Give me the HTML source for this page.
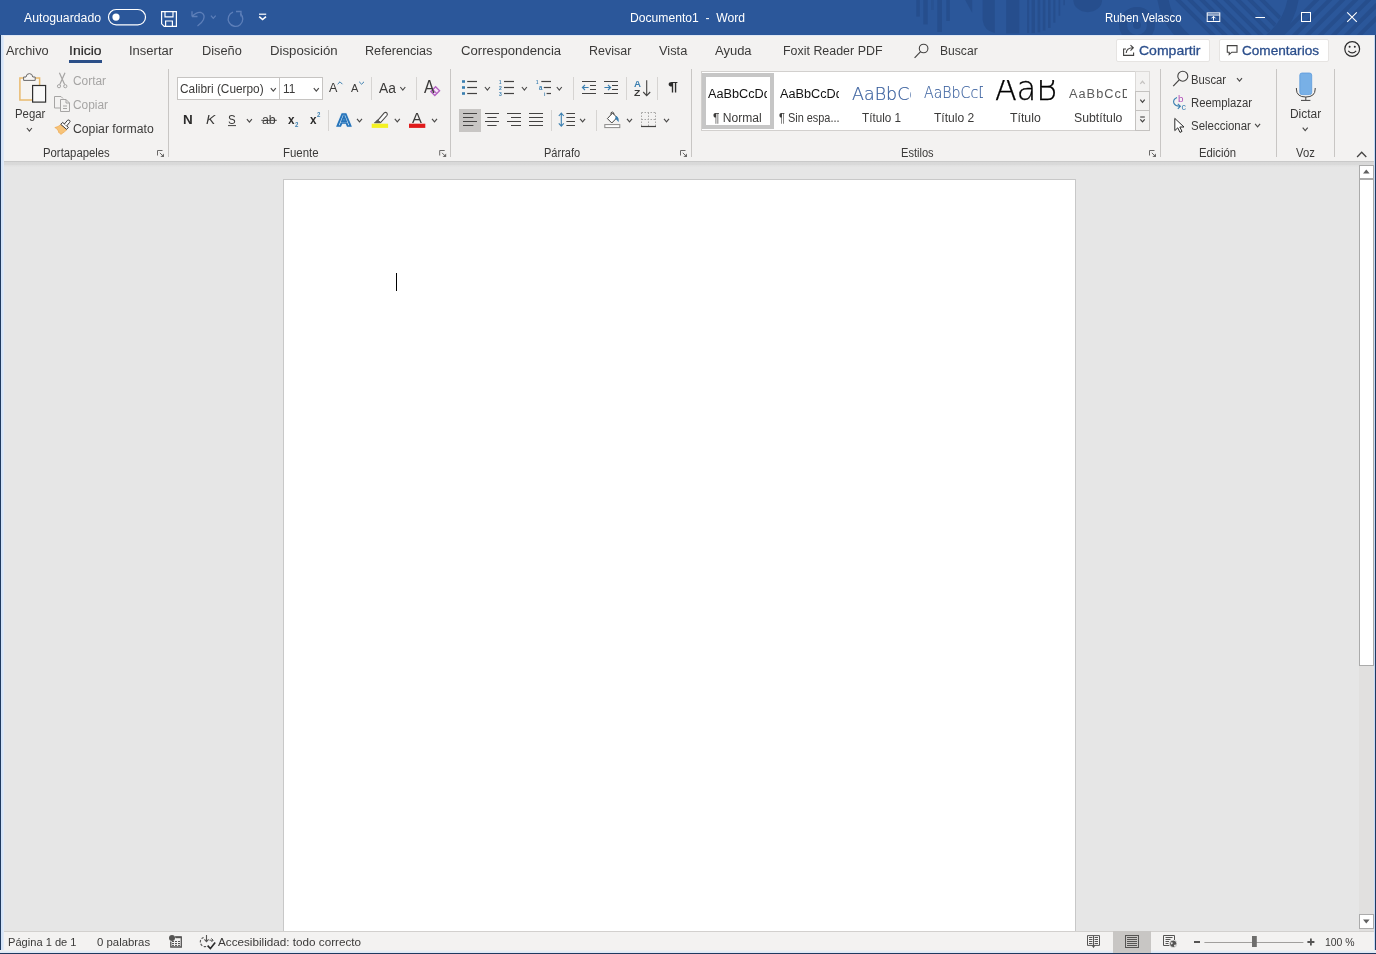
<!DOCTYPE html>
<html lang="es"><head><meta charset="utf-8"><title>Documento1 - Word</title>
<style>
html,body{margin:0;padding:0;}
body{width:1376px;height:954px;overflow:hidden;background:#e6e6e6;font-family:"Liberation Sans",sans-serif;}
#app{position:relative;width:1376px;height:954px;overflow:hidden;background:#e6e6e6;}
#app div{position:absolute;box-sizing:border-box;}
#icons{position:absolute;left:0;top:0;}
.t{position:absolute;white-space:nowrap;transform-origin:0 50%;}
.clip{overflow:hidden;}
#texts{left:0;top:0;width:1376px;height:954px;will-change:transform;}

</style></head>
<body>
<div id="app">
<div id="titlebar" style="left:0;top:0;width:1376px;height:35px;background:#2b579a;"></div>
<div id="tabrow" style="left:0;top:35px;width:1376px;height:31px;background:#f3f2f1;border-top:1px solid #dfe8f5;"></div>
<div id="ribbon" style="left:0;top:66px;width:1376px;height:95px;background:#f3f2f1;"></div>
<div id="ribshadow" style="left:0;top:161px;width:1376px;height:6px;background:linear-gradient(#c9c9c9 0,#c9c9c9 16.6%,#d8d8d8 16.7%,#dadada 60%,#e1e1e1 75%,#e5e5e5 100%);"></div>
<div id="tabsel" style="left:69px;top:60px;width:33px;height:3px;background:#2b4f88;"></div>
<div id="btnshare" style="left:1115.5px;top:39px;width:94px;height:22.5px;background:#fff;border:1px solid #e6e4e2;border-radius:2px;"></div>
<div id="btncomm" style="left:1218.5px;top:39px;width:110px;height:22.5px;background:#fff;border:1px solid #e6e4e2;border-radius:2px;"></div>
<!-- group separators -->
<div class="gsep" style="left:168px;top:69px;width:1px;height:88px;background:#c8c6c4;"></div>
<div class="gsep" style="left:450px;top:69px;width:1px;height:88px;background:#c8c6c4;"></div>
<div class="gsep" style="left:691px;top:69px;width:1px;height:88px;background:#c8c6c4;"></div>
<div class="gsep" style="left:1160px;top:69px;width:1px;height:88px;background:#c8c6c4;"></div>
<div class="gsep" style="left:1276px;top:69px;width:1px;height:88px;background:#c8c6c4;"></div>
<div class="gsep" style="left:1334px;top:69px;width:1px;height:88px;background:#c8c6c4;"></div>
<!-- small separators -->
<div class="ssep" style="left:371px;top:77px;width:1px;height:23px;background:#d6d4d2;"></div>
<div class="ssep" style="left:416px;top:77px;width:1px;height:23px;background:#d6d4d2;"></div>
<div class="ssep" style="left:328px;top:110px;width:1px;height:21px;background:#d6d4d2;"></div>
<div class="ssep" style="left:573px;top:77px;width:1px;height:23px;background:#d6d4d2;"></div>
<div class="ssep" style="left:626px;top:77px;width:1px;height:23px;background:#d6d4d2;"></div>
<div class="ssep" style="left:657px;top:77px;width:1px;height:23px;background:#d6d4d2;"></div>
<div class="ssep" style="left:551px;top:110px;width:1px;height:21px;background:#d6d4d2;"></div>
<div class="ssep" style="left:596px;top:110px;width:1px;height:21px;background:#d6d4d2;"></div>
<!-- font boxes -->
<div id="fontname" style="left:177px;top:77px;width:103px;height:23px;background:#fff;border:1px solid #c6c4c2;"></div>
<div id="fontsize" style="left:279px;top:77px;width:44px;height:23px;background:#fff;border:1px solid #c6c4c2;"></div>
<!-- active align-left -->
<div id="alignsel" style="left:459px;top:109px;width:22px;height:23px;background:#c8c6c4;"></div>
<!-- styles gallery -->
<div id="gallery" style="left:701px;top:71px;width:449px;height:59.5px;background:#fff;border:1px solid #d2d0ce;"></div>
<div id="stylesel" style="left:702px;top:73.2px;width:71.6px;height:55.5px;background:#c6c6c6;"></div>
<div id="styleselin" style="left:705.6px;top:76.8px;width:64.7px;height:48.2px;background:#fff;"></div>
<div id="galup" style="left:1135px;top:71px;width:15px;height:21px;background:#f3f2f1;border:1px solid #dcdad8;"></div>
<div id="galdn" style="left:1135px;top:91px;width:15px;height:20px;background:#f3f2f1;border:1px solid #c4c2c0;"></div>
<div id="galmore" style="left:1135px;top:110px;width:15px;height:20.5px;background:#f3f2f1;border:1px solid #c4c2c0;"></div>
<!-- page -->
<div id="page" style="left:283px;top:179px;width:793px;height:760px;background:#fff;border:1px solid #c8c8c8;"></div>
<div id="caret" style="left:396px;top:273px;width:1px;height:18px;background:#000;"></div>
<!-- scrollbar -->
<div id="sbtrack" style="left:1359px;top:165px;width:15px;height:766px;background:#e1e0df;"></div>
<div id="sbup" style="left:1359px;top:165px;width:15px;height:14px;background:#fff;border:1px solid #ababab;"></div>
<div id="sbthumb" style="left:1359px;top:179px;width:15px;height:487px;background:#fff;border:1px solid #ababab;"></div>
<div id="sbdown" style="left:1359px;top:914px;width:15px;height:15px;background:#fff;border:1px solid #ababab;"></div>
<!-- status bar -->
<div id="status" style="left:0;top:931px;width:1376px;height:23px;background:#f3f2f1;border-top:1px solid #d2d0ce;"></div>
<!-- window borders -->
<div id="bl1" style="left:0;top:35px;width:1px;height:919px;background:#1f3a60;"></div>
<div id="bl2" style="left:1px;top:35px;width:3.4px;height:917px;background:linear-gradient(to right,#d5e4f8 55%,#e8eff8);"></div>
<div id="br1" style="left:1375px;top:35px;width:1px;height:919px;background:#1f3a60;"></div>
<div id="br2" style="left:1373.5px;top:35px;width:1.5px;height:917px;background:#c5d9f5;"></div>
<div id="bb0" style="left:0;top:950px;width:1376px;height:3px;background:linear-gradient(#f3f2f1,#d9e6f7);"></div>
<div id="viewsel" style="left:1113px;top:931px;width:38px;height:21.6px;background:#c8c6c4;"></div>
<div id="bb1" style="left:0;top:952.6px;width:1376px;height:1.4px;background:#1f3a60;"></div>

<svg id="icons" width="1376" height="954" viewBox="0 0 1376 954">
<defs><clipPath id="tbclip"><rect x="0" y="0" width="1376" height="35"/></clipPath><clipPath id="circ"><circle cx="1228" cy="-12" r="60"/></clipPath></defs>
<g clip-path="url(#tbclip)">
<g fill="#264e8d">
<rect x="916.3" y="0" width="3.5" height="16.6"/><rect x="923.3" y="0" width="4.4" height="24.4"/><rect x="931" y="0" width="2.8" height="10" opacity=".6"/><rect x="937.3" y="0" width="4.7" height="32"/><rect x="946.3" y="0" width="3.5" height="21"/>
<path d="M965.2,0 H972.2 V13 Z"/>
<path d="M982.6,0 H994.8 V33 Q984,31 982.6,20 Z"/>
<rect x="1006.2" y="0" width="13.1" height="33.5"/>
<rect x="1027.1" y="0" width="2.1" height="33.1"/>
<rect x="1031.5" y="0" width="3.5" height="33.1"/>
<rect x="1037.6" y="0" width="2.6" height="32.3"/>
<rect x="1042.8" y="0" width="2.6" height="30.5"/>
<rect x="1048.0" y="0" width="2.6" height="27.9"/>
<rect x="1053.3" y="0" width="2.1" height="22.7"/>
<rect x="1058.5" y="0" width="1.7" height="15.7"/>
<rect x="1063.4" y="0" width="1.4" height="5.2"/>
<path d="M1073.3,0 H1102.1 A14.4,12.2 0 0 1 1073.3,0 Z"/>
<circle cx="1137" cy="25" r="4"/>
</g>
<g fill="none" stroke="#264e8d">
<circle cx="1137" cy="25" r="14" stroke-width="8"/>
<circle cx="1228" cy="-12" r="66" stroke-width="11"/>
<g clip-path="url(#circ)">
<path d="M1176,-2 L1216,38" stroke-width="4"/>
<path d="M1188,-2 L1228,38" stroke-width="4"/>
<path d="M1200,-2 L1240,38" stroke-width="4"/>
<path d="M1212,-2 L1252,38" stroke-width="4"/>
<path d="M1224,-2 L1264,38" stroke-width="4"/>
<path d="M1236,-2 L1276,38" stroke-width="4"/>
<path d="M1248,-2 L1288,38" stroke-width="4"/>
<path d="M1260,-2 L1300,38" stroke-width="4"/>
</g>
<path d="M1318.6,-2 L1278.6,38" stroke-width="4"/>
<path d="M1331.6,-2 L1291.6,38" stroke-width="4"/>
<path d="M1344.6,-2 L1304.6,38" stroke-width="4"/>
<path d="M1357.6,-2 L1317.6,38" stroke-width="4"/>
<path d="M1370.6,-2 L1330.6,38" stroke-width="4"/>
<path d="M1383.6,-2 L1343.6,38" stroke-width="4"/>
<path d="M1396.6,-2 L1356.6,38" stroke-width="4"/>
</g>
</g>
<rect x="108.5" y="9.5" width="37" height="15.4" rx="7.7" fill="none" stroke="#fff" stroke-width="1.2"/>
<circle cx="116" cy="17.1" r="3.6" fill="#fff"/>
<path d="M161.6,11.6 H176.4 V26.4 H164.2 L161.6,23.8 Z" fill="none" stroke="#fff" stroke-width="1.2"/>
<path d="M165,11.6 V16.8 H173 V11.6" fill="none" stroke="#fff" stroke-width="1.2"/>
<path d="M165.6,26.4 V21 H172.4 V26.4" fill="none" stroke="#fff" stroke-width="1.2"/>
<path d="M192,16.5 H197.5 M192,16.5 V11.2 M192.3,16.2 Q197,11.5 201,12.5 Q205.5,14.5 203.5,19.5 Q202,23 197.5,26" fill="none" stroke="#5d7fb9" stroke-width="1.3"/>
<path d="M210.9,15.6 L213.3,18.4 L215.7,15.6" fill="none" stroke="#5d7fb9" stroke-width="1.2"/>
<path d="M240.2,13.5 A7.3,7.3 0 1 1 233,12.2" fill="none" stroke="#5d7fb9" stroke-width="1.3"/>
<path d="M236,11.5 H241 V16.5" fill="none" stroke="#5d7fb9" stroke-width="1.3"/>
<path d="M259,14.2 H266.2" stroke="#fff" stroke-width="1.2"/>
<path d="M259.2,16.6 L262.6,19.6 L266,16.6" fill="none" stroke="#fff" stroke-width="1.5"/>
<rect x="1207.2" y="12.9" width="12.6" height="8.6" fill="none" stroke="#fff" stroke-width="1"/>
<path d="M1207.2,15 H1219.8" stroke="#fff" stroke-width="1"/>
<path d="M1213.5,20.5 V16.5 M1211.5,18.3 L1213.5,16.3 L1215.5,18.3" fill="none" stroke="#fff" stroke-width="1"/>
<path d="M1255.4,17.5 H1265" stroke="#fff" stroke-width="1"/>
<rect x="1301.5" y="12.5" width="9" height="9" fill="none" stroke="#fff" stroke-width="1"/>
<path d="M1347.2,12.3 L1356.8,21.9 M1356.8,12.3 L1347.2,21.9" stroke="#fff" stroke-width="1.1"/>
<circle cx="923.6" cy="48.5" r="4.3" fill="none" stroke="#444342" stroke-width="1.1"/>
<path d="M920.6,51.6 L914.6,57.8" stroke="#444342" stroke-width="1.2"/>
<path d="M1126,49 H1123.6 V55.4 H1133.6 V52.5" fill="none" stroke="#444342" stroke-width="1.1"/>
<path d="M1126.2,53 Q1126.5,48 1133,47.8 M1130.5,45.2 L1133.3,47.8 L1130.5,50.6" fill="none" stroke="#444342" stroke-width="1.1"/>
<path d="M1227.3,45.6 H1237 V52.2 H1231.8 L1229.2,54.6 V52.2 H1227.3 Z" fill="none" stroke="#444342" stroke-width="1.1"/>
<circle cx="1352.2" cy="49" r="7.4" fill="none" stroke="#2b2b2b" stroke-width="1.2"/>
<circle cx="1349.6" cy="46.8" r="1" fill="#2b2b2b"/><circle cx="1354.8" cy="46.8" r="1" fill="#2b2b2b"/>
<path d="M1348.2,50.8 Q1352.2,55 1356.2,50.8" fill="none" stroke="#2b2b2b" stroke-width="1.1"/>
<path d="M39.6,85 V78 H19.9 V100 H32" fill="#f6f4f1" stroke="#e9bb6e" stroke-width="1.5"/>
<path d="M23.6,80.4 V77 H26 Q26.4,73.6 29.4,73.6 Q32.4,73.6 32.8,77 H35.2 V80.4 Z" fill="#f6f5f4" stroke="#6a6968" stroke-width="1"/>
<rect x="32.6" y="85.5" width="13" height="16.6" fill="#f9f9f9" stroke="#2f2f2f" stroke-width="1.2"/>
<path d="M26.9,128.0 L29.4,131.0 L31.9,128.0" fill="none" stroke="#4a4948" stroke-width="1.15"/>
<path d="M59.4,72.8 L64.6,84.6 M65,72.8 L59.8,84.6" fill="none" stroke="#a6a5a4" stroke-width="1.2"/>
<circle cx="59" cy="86.2" r="1.6" fill="none" stroke="#a6a5a4" stroke-width="1"/><circle cx="65.3" cy="86.2" r="1.6" fill="none" stroke="#a6a5a4" stroke-width="1"/>
<path d="M60,108 H54.5 V96.5 H61 L63,98.5" fill="none" stroke="#a6a5a4" stroke-width="1"/>
<path d="M60.5,99.5 H66 L69.5,103 V111.5 H60.5 Z" fill="#f3f2f1" stroke="#a6a5a4" stroke-width="1"/>
<path d="M66,99.5 V103 H69.5 M63,106 H67 M63,108.5 H67" fill="none" stroke="#a6a5a4" stroke-width="1"/>
<path d="M54.8,127.6 Q58,127 61,124.6 L67,129.6 Q64.6,132 60.8,134.4 Q59.6,132.4 58.6,132.4 Q59,130.4 57.6,130.2 Q57.4,128.4 54.8,127.6 Z" fill="#f7c378" stroke="#eea84f" stroke-width=".7"/>
<path d="M60.8,124.4 L62.6,122.4 L68.4,127.4 L66.6,129.4 Z" fill="#fbfbfb" stroke="#3b3a39" stroke-width="1"/>
<path d="M64.4,124 L67.6,120.2 Q69,119.6 69.8,120.6 Q70.4,121.6 69.6,122.4 L66.6,126" fill="#fbfbfb" stroke="#3b3a39" stroke-width="1"/>
<path d="M157.5,155.5 V150.5 H162.5" fill="none" stroke="#6a6968" stroke-width="1"/>
<path d="M159.8,152.8 L163,156" fill="none" stroke="#6a6968" stroke-width="1"/>
<path d="M164,153.4 V157 H160.4 Z" fill="#6a6968"/>
<path d="M270.8,88.1 L273.3,91.1 L275.8,88.1" fill="none" stroke="#4a4948" stroke-width="1.15"/>
<path d="M313.8,88.1 L316.3,91.1 L318.8,88.1" fill="none" stroke="#4a4948" stroke-width="1.15"/>
<path d="M337.6,84.2 L340,81.8 L342.4,84.2" fill="none" stroke="#3b7fb0" stroke-width="1"/>
<path d="M359.2,81.8 L361.6,84.2 L364,81.8" fill="none" stroke="#3b7fb0" stroke-width="1"/>
<path d="M400.3,87.0 L402.8,90.0 L405.3,87.0" fill="none" stroke="#4a4948" stroke-width="1.15"/>
<path d="M430.8,91.5 L435.6,86.7 L439.6,90.7 L434.8,95.5 Z" fill="#f6e6f8" stroke="#b35fc1" stroke-width="1.3"/>
<path d="M432.8,89.6 L436.8,93.6" stroke="#b35fc1" stroke-width="1.2"/>
<path d="M228,125.6 H236" stroke="#444342" stroke-width="1"/>
<path d="M246.9,119.1 L249.4,122.1 L251.9,119.1" fill="none" stroke="#4a4948" stroke-width="1.15"/>
<path d="M261.3,120.3 H276.8" stroke="#444342" stroke-width="1"/>
<path d="M357.0,118.9 L359.5,121.9 L362.0,118.9" fill="none" stroke="#4a4948" stroke-width="1.15"/>
<path d="M394.8,118.9 L397.3,121.9 L399.8,118.9" fill="none" stroke="#4a4948" stroke-width="1.15"/>
<path d="M432.0,118.9 L434.5,121.9 L437.0,118.9" fill="none" stroke="#4a4948" stroke-width="1.15"/>
<path d="M377.6,120.6 L384.2,112.9 Q385.6,111.8 386.8,112.9 Q387.9,114.2 386.9,115.5 L380.6,122.6 Z" fill="#fbfbfb" stroke="#4a4948" stroke-width="1.1"/>
<path d="M374.2,123 L377.4,119.8 L380.8,122.6 L379.4,123 Z" fill="#5a5958" stroke="#5a5958" stroke-width=".6"/>
<rect x="371.7" y="123.7" width="16.4" height="4.2" fill="#f4f122"/>
<rect x="409" y="123.7" width="16.3" height="4.2" fill="#e01b1b"/>
<path d="M439.7,155.5 V150.5 H444.7" fill="none" stroke="#6a6968" stroke-width="1"/>
<path d="M442.0,152.8 L445.2,156" fill="none" stroke="#6a6968" stroke-width="1"/>
<path d="M446.2,153.4 V157 H442.59999999999997 Z" fill="#6a6968"/>
<rect x="462" y="80.2" width="3" height="2.6" fill="#3b7fb0"/>
<rect x="462" y="86.2" width="3" height="2.6" fill="#3b7fb0"/>
<rect x="462" y="92.2" width="3" height="2.6" fill="#3b7fb0"/>
<path d="M467.2,81.5 H477" stroke="#444342" stroke-width="1.2" fill="none"/>
<path d="M467.2,87.5 H477" stroke="#444342" stroke-width="1.2" fill="none"/>
<path d="M467.2,93.5 H477" stroke="#444342" stroke-width="1.2" fill="none"/>
<path d="M484.9,87.0 L487.4,90.0 L489.9,87.0" fill="none" stroke="#4a4948" stroke-width="1.15"/>
<path d="M504,81.5 H514" stroke="#444342" stroke-width="1.2" fill="none"/>
<path d="M504,87.5 H514" stroke="#444342" stroke-width="1.2" fill="none"/>
<path d="M504,93.5 H514" stroke="#444342" stroke-width="1.2" fill="none"/>
<path d="M521.9,87.0 L524.4,90.0 L526.9,87.0" fill="none" stroke="#4a4948" stroke-width="1.15"/>
<path d="M541.3,81.5 H551" stroke="#444342" stroke-width="1.2" fill="none"/>
<path d="M543.8,87.5 H551" stroke="#444342" stroke-width="1.2" fill="none"/>
<path d="M546.6,93.5 H551" stroke="#444342" stroke-width="1.2" fill="none"/>
<path d="M556.8,87.0 L559.3,90.0 L561.8,87.0" fill="none" stroke="#4a4948" stroke-width="1.15"/>
<path d="M582,81.5 H596" stroke="#444342" stroke-width="1" fill="none"/>
<path d="M582,93.5 H596" stroke="#444342" stroke-width="1" fill="none"/>
<path d="M590,85.5 H596" stroke="#444342" stroke-width="1" fill="none"/>
<path d="M590,89.5 H596" stroke="#444342" stroke-width="1" fill="none"/>
<path d="M588.6,87.5 H582.6 M585,85 L582.4,87.5 L585,90" fill="none" stroke="#3b7fb0" stroke-width="1.1"/>
<path d="M604,81.5 H618" stroke="#444342" stroke-width="1" fill="none"/>
<path d="M604,93.5 H618" stroke="#444342" stroke-width="1" fill="none"/>
<path d="M612,85.5 H618" stroke="#444342" stroke-width="1" fill="none"/>
<path d="M612,89.5 H618" stroke="#444342" stroke-width="1" fill="none"/>
<path d="M604.4,87.5 H610.4 M608,85 L610.6,87.5 L608,90" fill="none" stroke="#3b7fb0" stroke-width="1.1"/>
<path d="M646.7,80.2 V95.4 M643.2,92 L646.7,95.6 L650.2,92" fill="none" stroke="#444342" stroke-width="1.1"/>
<path d="M463,113.5 H477" stroke="#444342" stroke-width="1" fill="none"/>
<path d="M463,121.5 H477" stroke="#444342" stroke-width="1" fill="none"/>
<path d="M463,117.5 H473.4" stroke="#444342" stroke-width="1" fill="none"/>
<path d="M463,125.5 H473.4" stroke="#444342" stroke-width="1" fill="none"/>
<path d="M485,113.5 H499" stroke="#444342" stroke-width="1" fill="none"/>
<path d="M485,121.5 H499" stroke="#444342" stroke-width="1" fill="none"/>
<path d="M487.3,117.5 H496.6" stroke="#444342" stroke-width="1" fill="none"/>
<path d="M487.3,125.5 H496.6" stroke="#444342" stroke-width="1" fill="none"/>
<path d="M507,113.5 H521" stroke="#444342" stroke-width="1" fill="none"/>
<path d="M507,121.5 H521" stroke="#444342" stroke-width="1" fill="none"/>
<path d="M511,117.5 H521" stroke="#444342" stroke-width="1" fill="none"/>
<path d="M511,125.5 H521" stroke="#444342" stroke-width="1" fill="none"/>
<path d="M529,113.5 H543" stroke="#444342" stroke-width="1" fill="none"/>
<path d="M529,117.5 H543" stroke="#444342" stroke-width="1" fill="none"/>
<path d="M529,121.5 H543" stroke="#444342" stroke-width="1" fill="none"/>
<path d="M529,125.5 H543" stroke="#444342" stroke-width="1" fill="none"/>
<path d="M561.3,113.4 V126 M558.8,116 L561.3,113.2 L563.8,116 M558.8,123.4 L561.3,126.2 L563.8,123.4" fill="none" stroke="#3b7fb0" stroke-width="1.1"/>
<path d="M566.4,113.5 H575" stroke="#444342" stroke-width="1" fill="none"/>
<path d="M566.4,117.5 H575" stroke="#444342" stroke-width="1" fill="none"/>
<path d="M566.4,121.5 H575" stroke="#444342" stroke-width="1" fill="none"/>
<path d="M566.4,125.5 H575" stroke="#444342" stroke-width="1" fill="none"/>
<path d="M580.1,118.9 L582.6,121.9 L585.1,118.9" fill="none" stroke="#4a4948" stroke-width="1.15"/>
<path d="M607.4,118.6 L612.6,113 L617,117.6 L611.8,123 Z" fill="#fff" stroke="#444342" stroke-width="1"/>
<path d="M611,114.6 Q610.4,112 612.4,112 Q614,112.2 614,114.6" fill="none" stroke="#444342" stroke-width="1"/>
<path d="M616.2,116 Q618.8,117.5 618.4,121.5 Q617,119.5 615.4,118.8 Z" fill="#3b7fb0" stroke="#3b7fb0" stroke-width=".6"/>
<rect x="604.8" y="124.6" width="15" height="3" fill="#fff" stroke="#8a8988" stroke-width="1"/>
<path d="M627.0,118.9 L629.5,121.9 L632.0,118.9" fill="none" stroke="#4a4948" stroke-width="1.15"/>
<path d="M641.5,112.5 H655.5 M641.5,112.5 V126 M655.5,112.5 V126 M648.5,112.5 V126 M641.5,119.5 H655.5" fill="none" stroke="#a9a8a7" stroke-width="1" stroke-dasharray="1.5,1.5"/>
<path d="M641,126.5 H656" stroke="#444342" stroke-width="1.2"/>
<path d="M664.0,118.9 L666.5,121.9 L669.0,118.9" fill="none" stroke="#4a4948" stroke-width="1.15"/>
<path d="M680.5,155.5 V150.5 H685.5" fill="none" stroke="#6a6968" stroke-width="1"/>
<path d="M682.8,152.8 L686,156" fill="none" stroke="#6a6968" stroke-width="1"/>
<path d="M687,153.4 V157 H683.4 Z" fill="#6a6968"/>
<path d="M1140.3,83.9 L1142.5,81.3 L1144.7,83.9" fill="none" stroke="#c4c2c0" stroke-width="1.2"/>
<path d="M1140.3,99.7 L1142.5,102.3 L1144.7,99.7" fill="none" stroke="#444342" stroke-width="1.2"/>
<path d="M1140.2,117 H1144.8" stroke="#444342" stroke-width="1.1"/>
<path d="M1140.3,119.3 L1142.5,121.9 L1144.7,119.3" fill="none" stroke="#444342" stroke-width="1.2"/>
<path d="M1149.5,155.5 V150.5 H1154.5" fill="none" stroke="#6a6968" stroke-width="1"/>
<path d="M1151.8,152.8 L1155,156" fill="none" stroke="#6a6968" stroke-width="1"/>
<path d="M1156,153.4 V157 H1152.4 Z" fill="#6a6968"/>
<circle cx="1182.8" cy="76.2" r="5" fill="none" stroke="#444342" stroke-width="1.1"/>
<path d="M1179.2,79.8 L1173.2,86.2" stroke="#444342" stroke-width="1.2"/>
<path d="M1237.0,78.1 L1239.5,81.1 L1242.0,78.1" fill="none" stroke="#4a4948" stroke-width="1.15"/>
<path d="M1177,97.5 Q1172.4,99.5 1174,103.6 Q1175.5,106.4 1180,106.2 M1177.8,103.8 L1180.4,106.2 L1177.8,108.8" fill="none" stroke="#3b7fb0" stroke-width="1.1"/>
<path d="M1174.8,118.4 V130.6 L1177.8,127.8 L1180,132.4 L1182,131.4 L1179.8,127 H1184 Z" fill="#fff" stroke="#2b2b2b" stroke-width="1"/>
<path d="M1255.1,123.9 L1257.6,126.9 L1260.1,123.9" fill="none" stroke="#4a4948" stroke-width="1.15"/>
<rect x="1299.8" y="73" width="11.9" height="21.6" rx="2.2" fill="#78b0e6" stroke="#5a9add" stroke-width=".8"/>
<path d="M1296.4,88 V89 Q1296.4,97 1305.8,97 Q1315.2,97 1315.2,89 V88 M1305.8,97 V100.2 M1301,100.4 H1310.4" fill="none" stroke="#444342" stroke-width="1"/>
<path d="M1302.7,127.7 L1305.2,130.7 L1307.7,127.7" fill="none" stroke="#4a4948" stroke-width="1.15"/>
<path d="M1357.1,157.0 L1361.7,152.2 L1366.3,157.0" fill="none" stroke="#444342" stroke-width="1.3"/>
<path d="M1363,173.6 L1366.3,169.6 L1369.6,173.6 Z" fill="#606060"/>
<path d="M1363,919.6 L1366.3,923.6 L1369.6,919.6 Z" fill="#606060"/>
<path d="M175,936.8 H181.3 V947 H170.8 V941.5" fill="none" stroke="#555453" stroke-width="1.3"/>
<path d="M175.5,937.4 H181" stroke="#555453" stroke-width="1.6"/>
<rect x="172" y="941.0" width="2" height="1" fill="#555453"/>
<rect x="175" y="941.0" width="2" height="1" fill="#555453"/>
<rect x="178" y="941.0" width="2" height="1" fill="#555453"/>
<rect x="172" y="943.0" width="2" height="1" fill="#555453"/>
<rect x="175" y="943.0" width="2" height="1" fill="#555453"/>
<rect x="178" y="943.0" width="2" height="1" fill="#555453"/>
<rect x="172" y="944.9" width="2" height="1" fill="#555453"/>
<rect x="175" y="944.9" width="2" height="1" fill="#555453"/>
<rect x="178" y="944.9" width="2" height="1" fill="#555453"/>
<circle cx="172" cy="937.9" r="3" fill="#555453"/>
<path d="M203.6,937.4 A4.6,4.6 0 1 0 206.5,946.4" fill="none" stroke="#555453" stroke-width="1.1" stroke-dasharray="2.4,1.5"/>
<path d="M206.5,934.9 V941.4 M204.4,939.4 L206.5,941.6 L208.6,939.4" fill="none" stroke="#555453" stroke-width="1.1"/>
<path d="M209.5,940.2 H213 M211.4,938.4 L213.2,940.2 L211.4,942" fill="none" stroke="#555453" stroke-width="1"/>
<path d="M207.6,945.6 L210.4,948.6 L215.2,942.6" fill="none" stroke="#2b2b2b" stroke-width="1.6"/>
<path d="M1093.5,936 V947.6 M1087.5,935.6 H1099.5 V945.4 H1087.5 Z" fill="none" stroke="#555453" stroke-width="1"/>
<path d="M1089,937.5 H1092.4 M1094.6,937.5 H1098" stroke="#555453" stroke-width="1"/>
<path d="M1089,939.5 H1092.4 M1094.6,939.5 H1098" stroke="#555453" stroke-width="1"/>
<path d="M1089,941.5 H1092.4 M1094.6,941.5 H1098" stroke="#555453" stroke-width="1"/>
<path d="M1089,943.5 H1092.4 M1094.6,943.5 H1098" stroke="#555453" stroke-width="1"/>
<path d="M1092,945.6 L1093.5,947.4 L1095,945.6" fill="#555453" stroke="#555453" stroke-width=".6"/>
<rect x="1125.5" y="935.5" width="13" height="12" fill="none" stroke="#555453" stroke-width="1"/>
<path d="M1127,937.5 H1137" stroke="#555453" stroke-width="1"/>
<path d="M1127,939.5 H1137" stroke="#555453" stroke-width="1"/>
<path d="M1127,941.5 H1137" stroke="#555453" stroke-width="1"/>
<path d="M1127,943.5 H1137" stroke="#555453" stroke-width="1"/>
<path d="M1127,945.5 H1137" stroke="#555453" stroke-width="1"/>
<path d="M1169.5,945.5 H1163.5 V935.5 H1174.5 V940" fill="none" stroke="#555453" stroke-width="1"/>
<path d="M1165.5,937.5 H1172.5 M1165.5,939.5 H1170.5 M1165.5,941.5 H1169 M1165.5,943.5 H1168.5" stroke="#555453" stroke-width="1"/>
<circle cx="1173.2" cy="943.8" r="3.7" fill="#555453" stroke="#f3f2f1" stroke-width=".8"/>
<path d="M1170.6,942.6 Q1172,941.6 1173,942.8 Q1172.6,944.4 1171.2,944.6 Z M1174,945 Q1175.4,944 1176.2,945 Q1175.4,946.6 1174.2,946.6 Z" fill="#e8e7e6"/>
<path d="M1194,942 H1200" stroke="#555453" stroke-width="2"/>
<path d="M1204.4,942.5 H1303.4" stroke="#a19f9d" stroke-width="1"/>
<rect x="1252" y="936" width="4.8" height="11" fill="#6e6d6c"/>
<path d="M1307.4,942 H1314.4 M1310.9,938.5 V945.5" stroke="#555453" stroke-width="1.8"/>
</svg>
<div id="texts">
<span id="t0" class="t" style="left:24.0px;top:11.00px;font-size:12px;line-height:14px;color:#fff;transform:scaleX(1.0219);">Autoguardado</span>
<span id="t1" class="t" style="left:630.2px;top:11.00px;font-size:12px;line-height:14px;color:#fff;transform:scaleX(1.0108);">Documento1&nbsp; -&nbsp; Word</span>
<span id="t2" class="t" style="left:1104.6px;top:11.00px;font-size:12px;line-height:14px;color:#fff;transform:scaleX(0.9483);">Ruben Velasco</span>
<span id="t3" class="t" style="left:6.0px;top:44.00px;font-size:12.5px;line-height:14px;color:#3b3a39;transform:scaleX(1.0240);">Archivo</span>
<span id="t4" class="t" style="left:68.8px;top:44.00px;font-size:12.5px;line-height:14px;color:#2b2b2b;transform:scaleX(1.1165);-webkit-text-stroke:0.2px #2b2b2b;">Inicio</span>
<span id="t5" class="t" style="left:128.8px;top:44.00px;font-size:12.5px;line-height:14px;color:#3b3a39;transform:scaleX(1.0400);">Insertar</span>
<span id="t6" class="t" style="left:201.8px;top:44.00px;font-size:12.5px;line-height:14px;color:#3b3a39;transform:scaleX(1.0222);">Diseño</span>
<span id="t7" class="t" style="left:269.8px;top:44.00px;font-size:12.5px;line-height:14px;color:#3b3a39;transform:scaleX(1.0574);">Disposición</span>
<span id="t8" class="t" style="left:364.9px;top:44.00px;font-size:12.5px;line-height:14px;color:#3b3a39;transform:scaleX(1.0103);">Referencias</span>
<span id="t9" class="t" style="left:460.8px;top:44.00px;font-size:12.5px;line-height:14px;color:#3b3a39;transform:scaleX(1.0524);">Correspondencia</span>
<span id="t10" class="t" style="left:588.7px;top:44.00px;font-size:12.5px;line-height:14px;color:#3b3a39;transform:scaleX(0.9980);">Revisar</span>
<span id="t11" class="t" style="left:658.7px;top:44.00px;font-size:12.5px;line-height:14px;color:#3b3a39;transform:scaleX(1.0258);">Vista</span>
<span id="t12" class="t" style="left:715.4px;top:44.00px;font-size:12.5px;line-height:14px;color:#3b3a39;transform:scaleX(1.0389);">Ayuda</span>
<span id="t13" class="t" style="left:783.0px;top:44.00px;font-size:12.5px;line-height:14px;color:#3b3a39;transform:scaleX(0.9946);">Foxit Reader PDF</span>
<span id="t14" class="t" style="left:940.0px;top:44.00px;font-size:12.5px;line-height:14px;color:#3b3a39;transform:scaleX(0.9687);">Buscar</span>
<span id="t15" class="t" style="left:1138.5px;top:43.00px;font-size:13px;line-height:15px;color:#2c4f8c;transform:scaleX(1.0778);-webkit-text-stroke:0.3px #2c4f8c;">Compartir</span>
<span id="t16" class="t" style="left:1241.9px;top:43.00px;font-size:13px;line-height:15px;color:#2c4f8c;transform:scaleX(1.0450);-webkit-text-stroke:0.3px #2c4f8c;">Comentarios</span>
<span id="t17" class="t" style="left:15.0px;top:107.00px;font-size:12px;line-height:14px;color:#3b3a39;transform:scaleX(0.9477);">Pegar</span>
<span id="t18" class="t" style="left:73.3px;top:74.00px;font-size:12px;line-height:14px;color:#a6a5a4;transform:scaleX(0.9914);">Cortar</span>
<span id="t19" class="t" style="left:73.3px;top:98.00px;font-size:12px;line-height:14px;color:#a6a5a4;transform:scaleX(0.9914);">Copiar</span>
<span id="t20" class="t" style="left:73.3px;top:122.00px;font-size:12px;line-height:14px;color:#3b3a39;transform:scaleX(1.0174);">Copiar formato</span>
<span id="t21" class="t" style="left:43.2px;top:146.00px;font-size:12px;line-height:14px;color:#3b3a39;transform:scaleX(0.9440);">Portapapeles</span>
<span id="t22" class="t" style="left:180.1px;top:82.00px;font-size:12px;line-height:14px;color:#3b3a39;transform:scaleX(0.9877);">Calibri (Cuerpo)</span>
<span id="t23" class="t" style="left:283.1px;top:82.00px;font-size:12px;line-height:14px;color:#3b3a39;transform:scaleX(0.9830);">11</span>
<span id="t24" class="t" style="left:182.6px;top:112.00px;font-size:13px;line-height:15px;color:#2b2b2b;transform:scaleX(1.0330);font-weight:bold;">N</span>
<span id="t25" class="t" style="left:205.5px;top:112.00px;font-size:13px;line-height:15px;color:#3b3a39;transform:scaleX(1.0724);font-style:italic;">K</span>
<span id="t26" class="t" style="left:228.0px;top:112.00px;font-size:13px;line-height:15px;color:#3b3a39;transform:scaleX(0.8879);">S</span>
<span id="t27" class="t" style="left:262.1px;top:113.00px;font-size:12px;line-height:14px;color:#3b3a39;transform:scaleX(1.0297);">ab</span>
<span id="t28" class="t" style="left:288.0px;top:112.00px;font-size:13px;line-height:15px;color:#2b2b2b;transform:scaleX(0.8985);font-weight:bold;">x</span>
<span id="t29" class="t" style="left:294.8px;top:121.00px;font-size:7px;line-height:7px;color:#3b7fb0;transform:scaleX(0.8704);font-weight:bold;">2</span>
<span id="t30" class="t" style="left:310.0px;top:112.00px;font-size:13px;line-height:15px;color:#2b2b2b;transform:scaleX(0.8985);font-weight:bold;">x</span>
<span id="t31" class="t" style="left:316.8px;top:111.00px;font-size:7px;line-height:7px;color:#3b7fb0;transform:scaleX(0.8704);font-weight:bold;">2</span>
<span id="t32" class="t" style="left:329.0px;top:80.00px;font-size:13.5px;line-height:15px;color:#3b3a39;transform:scaleX(0.9317);">A</span>
<span id="t33" class="t" style="left:351.0px;top:82.00px;font-size:11.5px;line-height:12px;color:#3b3a39;transform:scaleX(0.9646);">A</span>
<span id="t34" class="t" style="left:378.8px;top:80.00px;font-size:14px;line-height:16px;color:#3b3a39;transform:scaleX(0.9858);">Aa</span>
<span id="t35" class="t" style="left:424.0px;top:77.00px;font-size:18px;line-height:20px;color:#3b3a39;transform:scaleX(0.8738);">A</span>
<span id="t36" class="t" style="left:412.4px;top:109.00px;font-size:15px;line-height:17px;color:#3b3a39;transform:scaleX(0.9885);">A</span>
<span id="t37" class="t" style="left:283.3px;top:146.00px;font-size:12px;line-height:14px;color:#3b3a39;transform:scaleX(0.9544);">Fuente</span>
<span id="t38" class="t" style="left:544.4px;top:146.00px;font-size:12px;line-height:14px;color:#3b3a39;transform:scaleX(0.9186);">Párrafo</span>
<span id="t39" class="t" style="left:901.0px;top:146.00px;font-size:12px;line-height:14px;color:#3b3a39;transform:scaleX(0.9240);">Estilos</span>
<span id="t40" class="t" style="left:1199.4px;top:146.00px;font-size:12px;line-height:14px;color:#3b3a39;transform:scaleX(0.9441);">Edición</span>
<span id="t41" class="t" style="left:1295.6px;top:146.00px;font-size:12px;line-height:14px;color:#3b3a39;transform:scaleX(0.9371);">Voz</span>
<span id="t42" class="t" style="left:634.0px;top:78.00px;font-size:9.5px;line-height:11px;color:#3b7fb0;transform:scaleX(1.0182);font-weight:bold;">A</span>
<span id="t43" class="t" style="left:634.0px;top:87.00px;font-size:9.5px;line-height:11px;color:#3b3a39;transform:scaleX(1.0839);font-weight:bold;">Z</span>
<span id="t44" class="t" style="left:668.0px;top:80.00px;font-size:12.5px;line-height:14px;color:#2b2b2b;transform:scaleX(1.4382);font-weight:bold;">¶</span>
<div class="clip" style="left:705px;top:76px;width:61.700000000000045px;height:28px"><span id="t45" class="t" style="left:3.4px;top:11.00px;font-size:12px;line-height:14px;color:#111;transform:scaleX(1.0570);">AaBbCcDd</span></div>
<span id="t46" class="t" style="left:713.1px;top:111.00px;font-size:12px;line-height:14px;color:#3b3a39;transform:scaleX(1.0062);">¶ Normal</span>
<div class="clip" style="left:776px;top:76px;width:62.799999999999955px;height:28px"><span id="t47" class="t" style="left:4.3px;top:11.00px;font-size:12px;line-height:14px;color:#111;transform:scaleX(1.0570);">AaBbCcDd</span></div>
<span id="t48" class="t" style="left:778.9px;top:111.00px;font-size:12px;line-height:14px;color:#3b3a39;transform:scaleX(0.9108);">¶ Sin espa...</span>
<div class="clip" style="left:848px;top:74px;width:62.60000000000002px;height:32px"><span id="t49" class="t" style="left:4.4px;top:9.00px;font-size:17.8px;line-height:21px;color:#3a609e;transform:scaleX(0.9814);font-family:'DejaVu Sans Light','DejaVu Sans',sans-serif;font-weight:200;-webkit-text-stroke:0.2px #3a609e;">AaBbCc</span></div>
<span id="t50" class="t" style="left:862.3px;top:111.00px;font-size:12px;line-height:14px;color:#3b3a39;transform:scaleX(0.9757);">Título 1</span>
<div class="clip" style="left:920px;top:74px;width:62.700000000000045px;height:32px"><span id="t51" class="t" style="left:4.4px;top:10.00px;font-size:15.5px;line-height:18px;color:#3a609e;transform:scaleX(0.9117);font-family:'DejaVu Sans Light','DejaVu Sans',sans-serif;font-weight:200;-webkit-text-stroke:0.15px #3a609e;">AaBbCcD</span></div>
<span id="t52" class="t" style="left:934.1px;top:111.00px;font-size:12px;line-height:14px;color:#3b3a39;transform:scaleX(1.0056);">Título 2</span>
<div class="clip" style="left:990px;top:80px;width:70px;height:26px"><span id="t53" class="t" style="left:4.8px;top:-11.00px;font-size:33px;line-height:39px;color:#000;transform:scaleX(0.9638);font-family:'DejaVu Sans Light','DejaVu Sans',sans-serif;font-weight:200;-webkit-text-stroke:0.3px #000;">AaB</span></div>
<span id="t54" class="t" style="left:1010.4px;top:111.00px;font-size:12px;line-height:14px;color:#3b3a39;transform:scaleX(1.0247);">Título</span>
<div class="clip" style="left:1064px;top:74px;width:63.09999999999991px;height:32px"><span id="t55" class="t" style="left:4.6px;top:13.00px;font-size:12.5px;line-height:14px;color:#5a5a5a;transform:scaleX(1.0193);letter-spacing:1px;">AaBbCcD</span></div>
<span id="t56" class="t" style="left:1073.6px;top:111.00px;font-size:12px;line-height:14px;color:#3b3a39;transform:scaleX(1.0228);">Subtítulo</span>
<span id="t57" class="t" style="left:1191.2px;top:73.00px;font-size:12px;line-height:14px;color:#3b3a39;transform:scaleX(0.9383);">Buscar</span>
<span id="t58" class="t" style="left:1191.2px;top:96.00px;font-size:12px;line-height:14px;color:#3b3a39;transform:scaleX(0.9421);">Reemplazar</span>
<span id="t59" class="t" style="left:1191.2px;top:119.00px;font-size:12px;line-height:14px;color:#3b3a39;transform:scaleX(0.9545);">Seleccionar</span>
<span id="t60" class="t" style="left:1290.0px;top:107.00px;font-size:12px;line-height:14px;color:#3b3a39;transform:scaleX(0.9940);">Dictar</span>
<span id="t61" class="t" style="left:1177.5px;top:94.00px;font-size:9px;line-height:10px;color:#b04fb8;transform:scaleX(1.0965);">b</span>
<span id="t62" class="t" style="left:1181.5px;top:102.00px;font-size:9px;line-height:10px;color:#3b7fb0;">c</span>
<span id="t63" class="t" style="left:8.0px;top:936.00px;font-size:11.5px;line-height:12px;color:#3b3a39;transform:scaleX(0.9653);">Página 1 de 1</span>
<span id="t64" class="t" style="left:96.6px;top:936.00px;font-size:11.5px;line-height:12px;color:#3b3a39;transform:scaleX(0.9889);">0 palabras</span>
<span id="t65" class="t" style="left:217.6px;top:936.00px;font-size:11.5px;line-height:12px;color:#3b3a39;transform:scaleX(1.0176);">Accesibilidad: todo correcto</span>
<span id="t66" class="t" style="left:1325.3px;top:936.00px;font-size:11.5px;line-height:12px;color:#3b3a39;transform:scaleX(0.9085);">100 %</span>
<span id="t67" class="t" style="left:336.5px;top:111.00px;font-size:17px;line-height:19px;color:#e8f3fc;transform:scaleX(1.1399);font-weight:bold;-webkit-text-stroke:1.7px #2674ba;text-shadow:0 0 2px #8fc4ee;">A</span>
<span id="t68" class="t" style="left:499.0px;top:79.00px;font-size:5.5px;line-height:6px;color:#3b7fb0;transform:scaleX(0.7837);font-weight:bold;">1</span>
<span id="t69" class="t" style="left:498.8px;top:85.00px;font-size:5.5px;line-height:6px;color:#3b7fb0;transform:scaleX(0.9143);font-weight:bold;">2</span>
<span id="t70" class="t" style="left:498.8px;top:91.00px;font-size:5.5px;line-height:6px;color:#3b7fb0;transform:scaleX(0.9143);font-weight:bold;">3</span>
<span id="t71" class="t" style="left:536.0px;top:79.00px;font-size:5.5px;line-height:6px;color:#3b7fb0;transform:scaleX(0.7837);font-weight:bold;">1</span>
<span id="t72" class="t" style="left:539.0px;top:84.00px;font-size:6.5px;line-height:7px;color:#3b7fb0;transform:scaleX(0.9379);font-weight:bold;">a</span>
<span id="t73" class="t" style="left:544.2px;top:91.00px;font-size:6px;line-height:6px;color:#3b7fb0;transform:scaleX(0.8374);font-weight:bold;">i</span>
</div>
</div>
</body></html>
